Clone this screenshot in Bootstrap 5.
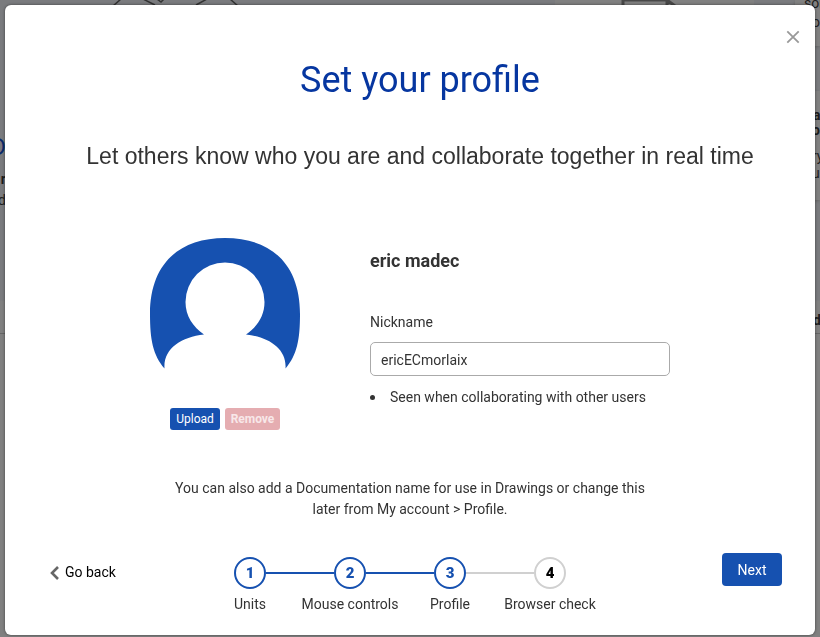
<!DOCTYPE html>
<html lang="en">
<head>
<meta charset="utf-8">
<meta name="viewport" content="width=device-width, initial-scale=1">
<title>Set your profile</title>
<link href="https://cdn.jsdelivr.net/npm/bootstrap@5.3.0/dist/css/bootstrap.min.css" rel="stylesheet">
<style>
  :root { --brand: #1651b0; --ink: #333; }
  body { font-family: Roboto, "Liberation Sans", sans-serif; font-size: 14px; line-height: 21px; color: var(--ink); background: #808080; }
  button, input { font-family: inherit; }

  /* Dimmed page behind the dialog */
  .behind { z-index: 0; background: linear-gradient(#7a7b7e, #7a7b7e 300px, #808080 301px); color: #1d1d1d; }
  .behind > * { position: absolute; }
  .b-sketch { left: 110px; top: 0; }
  .b-tile { left: 555px; top: 0; width: 199px; height: 50px; background: #808080; }
  .b-doc { left: 620px; top: 0; }
  .b-tile-a { left: 795px; right: 0; top: 0; height: 46px; background: #808080; box-shadow: 0 1px 3px #666; }
  .b-tile-b { left: 795px; right: 0; top: 91px; height: 109px; background: #808080; box-shadow: 0 1px 3px #666; }
  .b-rule { left: 0; right: 0; top: 333px; height: 1px; background: #666; }
  .b-left { left: 0; top: 130px; width: 6px; }
  .b-left span { display: block; direction: rtl; white-space: nowrap; }
  .b-initial { font-size: 24px; line-height: 34px; margin-bottom: 5px; color: #0a2a6b; }
  .b-right { left: 804px; top: 0; right: 0; overflow: hidden; }
  .b-right span { position: absolute; white-space: nowrap; line-height: 16px; }
  .b-r1 { top: -5px; left: 0; } .b-r2 { top: 14px; left: 8px; }
  .b-r3 { top: 107px; left: 9px; } .b-r4 { top: 122px; left: 8px; }
  .b-r5 { top: 148px; left: 8px; } .b-r6 { top: 165px; left: 8px; } .b-r7 { top: 312px; left: 9px; }

  .dialog-page { z-index: 1; padding: 5px 5px 2px; }
  .dialog-box { background: #fff; border: 0; border-radius: 6px; box-shadow: 0 0 3px rgba(0,0,0,.5); padding: 51px 0 20px; color: var(--ink); }
  .dismiss { position: absolute; top: 24px; right: 14px; width: 16px; height: 16px; }
  .heading { padding-left: 20px; }
  .heading h1 { font-size: 36px; line-height: 48px; color: #0636a0; margin-bottom: 35px; font-weight: 400; }
  .heading p { font-family: "Liberation Sans", Arial, sans-serif; font-size: 23px; line-height: 34px; margin-bottom: 65px; }
  .profile { gap: 70px; }
  .portrait { width: 150px; }
  .portrait svg { margin-bottom: 38px; }
  .portrait-actions { gap: 5px; margin: 0 20px; }
  .fields { width: 300px; padding-top: 12px; }
  .fields h2 { font-size: 18px; line-height: 22px; font-weight: 700; margin-bottom: 40px; }
  .fields label { margin-bottom: 9px; }
  .fields .form-control { height: 34px; font-size: 14px; padding: 2px 10px 0; color: var(--ink); border-color: #aaa; border-radius: 5px; margin-bottom: 11px; }
  .fields li::before { content: ""; width: 5px; height: 5px; border-radius: 50%; background: var(--ink); margin-right: 15px; }
  .mini { height: 22px; padding: 0; border: 0; border-radius: 3px; font-size: 12px; line-height: 22px; }
  .mini-upload { width: 50px; background: var(--brand); color: #fff; }
  .mini-remove, .mini-remove:disabled { width: 55px; background: #e5adb1; color: #f8e8e9; opacity: 1; font-weight: 700; }
  .note { width: 480px; max-width: 100%; margin: 48px auto 33px; }
  .actions { display: grid; grid-template-columns: 150px minmax(0, 400px) 1fr; padding: 0 33px 0 45px; }
  .back { color: #000; margin-top: 9px; gap: 6px; }
  .next { width: 60px; height: 33px; padding: 1px 0 0; font-size: 14px; background: var(--brand); border: 0; border-radius: 4px; }
  .steps { margin: 4px 0 0; }
  .steps li { position: relative; color: var(--brand); }
  .steps li + li::before { content: ""; position: absolute; top: 15px; right: calc(50% + 16px); width: calc(100% - 32px); height: 2px; background: currentColor; }
  .steps li.todo { color: #d0d0d0; }
  .dot { width: 32px; height: 32px; border: 2px solid currentColor; font-size: 15px; font-weight: 700; margin-bottom: 5px; }
  .todo .dot b { color: #000; }
  .steps small { font-size: 14px; color: var(--ink); white-space: nowrap; }
</style>
</head>
<body>
<div class="behind position-fixed top-0 bottom-0 start-0 end-0 overflow-hidden" aria-hidden="true">
  <svg class="b-sketch" width="130" height="6" fill="none" stroke="#333" stroke-width="1.5"><path d="M3 6 11-1M33-1 45 5M47-1l4 3 3-3M86 5 97-1M120-1l8 7"/></svg>
  <div class="b-tile"></div>
  <svg class="b-doc" width="60" height="6" fill="none" stroke="#484848" stroke-width="3"><path d="M3 6V0H47V6M47 0l8 6"/></svg>
  <div class="b-tile-a"></div><div class="b-tile-b"></div><div class="b-rule"></div>
  <div class="b-left"><span class="b-initial">D</span><span class="fw-bold">r</span><span>d</span></div>
  <div class="b-right bottom-0"><span class="b-r1">som</span><span class="b-r2">o</span><span class="b-r3 fw-bold">a</span><span class="b-r4 fw-bold">o</span><span class="b-r5">ry</span><span class="b-r6">ur</span><span class="b-r7 fw-bold">d</span></div>
</div>

<main class="dialog-page position-relative">
  <div class="dialog-box modal-content" role="dialog" aria-labelledby="dialog-title">
    <button type="button" class="dismiss btn p-0 border-0 d-flex align-items-center justify-content-center" aria-label="Close">
      <svg width="14" height="14" fill="none" stroke="#999" stroke-width="1.8"><path d="M1.3 1.3 12.7 12.7M12.7 1.3 1.3 12.7"/></svg>
    </button>
    <header class="heading text-center">
      <h1 id="dialog-title">Set your profile</h1>
      <p>Let others know who you are and collaborate together in real time</p>
    </header>

    <section class="profile d-flex flex-wrap justify-content-center">
      <div class="portrait">
        <svg class="d-block" width="150" height="132" viewBox="0 0 150 132" role="img" aria-label="Profile picture">
          <path fill="#1651b0" d="M14.500 130.500C3 117 0 102 0 76C0 26 29 0 75 0S150 26 150 76C150 102 147 117 135.500 130.500C137 111 119 99 96 96.500C107 89 114.500 78 114.500 64A39.500 39.500 0 1 0 35.500 64C35.500 78 43 89 54 96.500C31 99 13 111 14.500 130.500Z"/>
        </svg>
        <div class="portrait-actions d-flex">
          <button type="button" class="mini mini-upload btn">Upload</button>
          <button type="button" class="mini mini-remove btn" disabled>Remove</button>
        </div>
      </div>
      <div class="fields">
        <h2>eric madec</h2>
        <label for="nickname" class="d-block">Nickname</label>
        <input id="nickname" class="form-control" type="text" value="ericECmorlaix">
        <ul class="list-unstyled mb-0"><li class="d-flex align-items-center">Seen when collaborating with other users</li></ul>
      </div>
    </section>

    <p class="note text-center">You can also add a Documentation name for use in Drawings or change this<br>later from My account &gt; Profile.</p>

    <footer class="actions align-items-start">
      <a href="#" class="back d-inline-flex align-items-center text-decoration-none">
        <svg width="9" height="14" fill="none" stroke="#666" stroke-width="2.6"><path d="M8 1 2 7l6 6"/></svg>Go back
      </a>
      <ol class="steps d-flex list-unstyled text-center">
        <li class="col-3"><span class="dot d-flex align-items-center justify-content-center rounded-circle mx-auto"><b>1</b></span><small>Units</small></li>
        <li class="col-3"><span class="dot d-flex align-items-center justify-content-center rounded-circle mx-auto"><b>2</b></span><small>Mouse controls</small></li>
        <li class="col-3"><span class="dot d-flex align-items-center justify-content-center rounded-circle mx-auto"><b>3</b></span><small>Profile</small></li>
        <li class="col-3 todo"><span class="dot d-flex align-items-center justify-content-center rounded-circle mx-auto"><b>4</b></span><small>Browser check</small></li>
      </ol>
      <button type="button" class="next btn btn-primary ms-auto">Next</button>
    </footer>
  </div>
</main>
<script src="https://cdn.jsdelivr.net/npm/bootstrap@5.3.0/dist/js/bootstrap.bundle.min.js"></script>
</body>
</html>
